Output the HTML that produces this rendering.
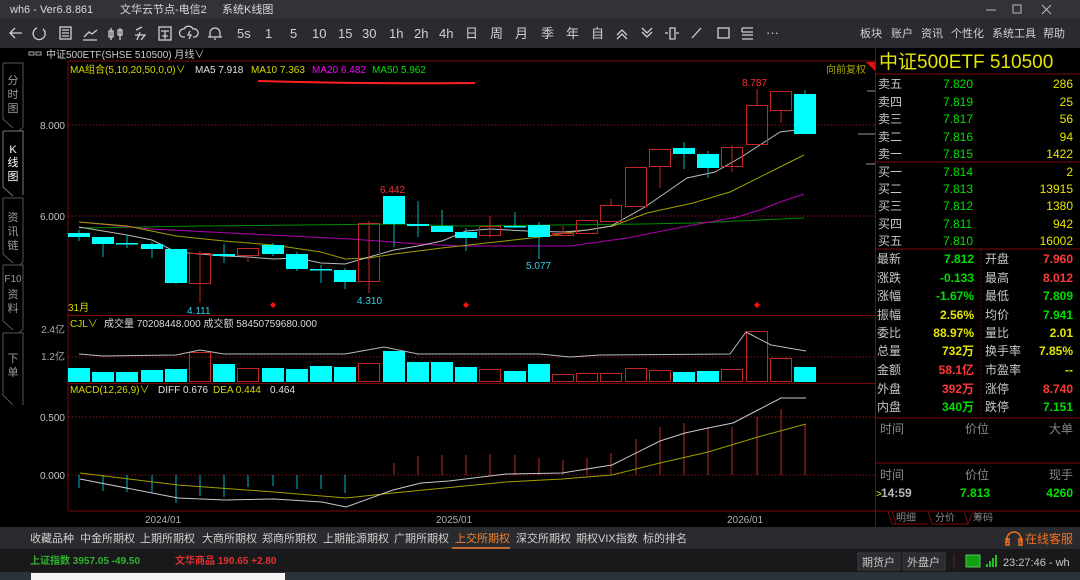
<!DOCTYPE html>
<html><head><meta charset="utf-8"><style>
html,body{margin:0;padding:0;background:#000;width:1080px;height:580px;overflow:hidden}
svg{display:block}
text{font-family:"Liberation Sans","Noto Sans CJK SC",sans-serif}
</style></head><body>
<svg width="1080" height="580" viewBox="0 0 1080 580" xmlns="http://www.w3.org/2000/svg">
<!-- title bar -->
<rect x="0" y="0" width="1080" height="19" fill="#323336"/>
<g fill="#d8d8d8" font-size="11">
<text x="10" y="13">wh6  -  Ver6.8.861</text>
<text x="120" y="13">文华云节点-电信2</text>
<text x="222" y="13">系统K线图</text>
</g>
<g stroke="#bbb" stroke-width="1" fill="none">
<line x1="986" y1="10" x2="996" y2="10"/>
<rect x="1013" y="5" width="8" height="8"/>
<path d="M1042 5l9 9M1051 5l-9 9"/>
</g>
<!-- toolbar -->
<rect x="0" y="19" width="1080" height="29" fill="#2a2b2e"/>
<g stroke="#d0d0d0" stroke-width="1.3" fill="none">
<path d="M22 33H10M15 28l-5 5 5 5"/>
<path d="M37 28a6 6 0 1 0 6 1"/>
<rect x="60" y="27" width="11" height="12"/><path d="M62 30h7M62 33h7M62 36h7"/>
<path d="M84 37l5-5 3 2 5-4M83 40h14"/>
<path d="M111 28v12M109 31h4v6h-4zM120 28v12M118 30h4v5h-4z"/>
<path d="M136 30l6-3M135 35h10l-4 5M140 32l-3 8"/>
<rect x="159" y="27" width="12" height="13"/><path d="M161 31h8M165 31v8M162 36h6"/>
<path d="M185 37h-2a4 4 0 0 1 1-8 5 5 0 0 1 9 0 4 4 0 0 1 2 8h-2M190 31l-2 4h3l-2 4"/>
<path d="M210 37v-4a5 5 0 0 1 10 0v4h2H208M214 39h2"/>
<path d="M617 35l5-5 5 5M617 39l5-5 5 5"/>
<path d="M642 28l5 5 5-5M642 32l5 5 5-5"/>
<path d="M665 33h3M676 33h3M670 28h5v11h-5z"/>
<path d="M692 38l9-10"/>
<rect x="718" y="28" width="11" height="10"/>
<path d="M742 28h11M742 32h11M742 35h11M742 39h11M742 28v4"/>
</g>
<g fill="#d0d0d0" font-size="13">
<text x="237" y="38">5s</text><text x="265" y="38">1</text><text x="290" y="38">5</text>
<text x="312" y="38">10</text><text x="338" y="38">15</text><text x="362" y="38">30</text>
<text x="389" y="38">1h</text><text x="414" y="38">2h</text><text x="439" y="38">4h</text>
<text x="465" y="38">日</text><text x="490" y="38">周</text><text x="515" y="38">月</text>
<text x="541" y="38">季</text><text x="566" y="38">年</text><text x="591" y="38">自</text>
<text x="766" y="37">···</text>
</g>
<g fill="#d0d0d0" font-size="11">
<text x="860" y="37">板块</text><text x="891" y="37">账户</text><text x="921" y="37">资讯</text>
<text x="951" y="37">个性化</text><text x="992" y="37">系统工具</text><text x="1043" y="37">帮助</text>
</g>

<!-- chart header -->
<g stroke="#aaa" fill="none"><rect x="29" y="52" width="5" height="3"/><rect x="36" y="52" width="5" height="3"/></g>
<text x="46" y="58" fill="#cfcfcf" font-size="10">中证500ETF(SHSE 510500)   月线∨</text>

<!-- sidebar tabs -->
<g stroke="#555" fill="#000" stroke-width="1">
<path d="M3 63h20v64l-6 6M3 63v56l10 9"/>
<path d="M3 131h20v64M3 131v56l10 9" stroke="#777"/>
<path d="M3 198h20v64M3 198v56l10 9M23 262l-6 6"/>
<path d="M3 265h20v64M3 265v56l10 9M23 329l-6 6"/>
<path d="M3 333h20v72M3 333v62l10 10"/>
</g>
<g fill="#9a9a9a" font-size="11" text-anchor="middle">
<text x="13" y="84">分</text><text x="13" y="98">时</text><text x="13" y="112">图</text>
<text x="13" y="153" fill="#fff">K</text><text x="13" y="166" fill="#fff">线</text><text x="13" y="180" fill="#fff">图</text>
<text x="13" y="221">资</text><text x="13" y="235">讯</text><text x="13" y="249">链</text>
<text x="13" y="282" font-size="10">F10</text><text x="13" y="298">资</text><text x="13" y="312">料</text>
<text x="13" y="362">下</text><text x="13" y="376">单</text>
</g>

<!-- panels borders -->
<g stroke="#7a0a0a" stroke-width="1" fill="none">
<line x1="68" y1="61" x2="875" y2="61"/>
<line x1="68" y1="61" x2="68" y2="511"/>
<line x1="68" y1="315.5" x2="875" y2="315.5"/>
<line x1="68" y1="383.5" x2="875" y2="383.5"/>
<line x1="68" y1="511" x2="875" y2="511"/>
<line x1="875.5" y1="48" x2="875.5" y2="527"/>
</g>
<g stroke="#8a1a1a" stroke-dasharray="1.5 2" stroke-width="1">
<line x1="68" y1="125" x2="875" y2="125"/>
<line x1="68" y1="216" x2="875" y2="216"/>
<line x1="68" y1="357" x2="875" y2="357"/>
<line x1="68" y1="417" x2="875" y2="417"/>
<line x1="68" y1="475" x2="875" y2="475"/>
</g>
<g fill="#c4c4c4" font-size="10" text-anchor="end">
<text x="65" y="129">8.000</text><text x="65" y="220">6.000</text>
<text x="65" y="333" fill="#aaa">2.4亿</text><text x="65" y="360" fill="#aaa">1.2亿</text>
<text x="65" y="421">0.500</text><text x="65" y="479">0.000</text>
</g>

<!-- MA legend -->
<g font-size="10">
<text x="70" y="73" fill="#d8d800">MA组合(5,10,20,50,0,0)∨</text>
<text x="195" y="73" fill="#e0e0e0">MA5 7.918</text>
<text x="251" y="73" fill="#d8d800">MA10 7.363</text>
<text x="312" y="73" fill="#ff00ff">MA20 6.482</text>
<text x="372" y="73" fill="#00e000">MA50 5.962</text>
</g>
<path d="M258 81Q360 84 475 83" stroke="#ff2020" stroke-width="2" fill="none"/>
<text x="866" y="73" fill="#a8a800" font-size="10" text-anchor="end">向前复权</text>
<path d="M866 62h9v9z" fill="#e01010"/>
<g stroke="#999"><line x1="867" y1="91" x2="875" y2="91"/><line x1="858" y1="134" x2="875" y2="134"/><line x1="866" y1="164" x2="875" y2="164"/></g>

<!-- MA lines -->
<g fill="none" stroke-width="1">
<polyline stroke="#008c00" points="79,228 200,226 400,224 460,226 643,224 693,223 760,220 804,218"/>
<polyline stroke="#b000b0" points="79,222 150,229 250,234 350,239 420,244 460,246 570,246 627,238 693,225 737,217 760,210 780,202 804,194"/>
<polyline stroke="#a0a000" points="79,222 127,226 176,236 224,241 273,245 321,252 345,259 369,258 394,254 442,248 460,246 540,237 613,226 647,213 693,203 730,192 780,167 804,155"/>
<polyline stroke="#bbbbbb" points="79,227 103,231 127,235 152,240 176,252 200,254 224,256 248,257 273,259 297,258 321,263 345,264 369,257 394,250 418,246 442,241 466,231 490,229 527,231 563,232 588,230 611,226 645,207 687,178 715,172 743,156 780,132 804,129"/>
</g>

<!-- candles -->
<g stroke-width="1">
<g stroke="#00b8b8">
<line x1="79" y1="230" x2="79" y2="241"/><line x1="103" y1="237" x2="103" y2="257"/><line x1="127" y1="235" x2="127" y2="248"/><line x1="152" y1="242" x2="152" y2="258"/><line x1="176" y1="249" x2="176" y2="284"/><line x1="224" y1="244" x2="224" y2="263"/><line x1="273" y1="243" x2="273" y2="256"/><line x1="297" y1="252" x2="297" y2="271"/><line x1="321" y1="265" x2="321" y2="283"/><line x1="345" y1="268" x2="345" y2="289"/><line x1="394" y1="196" x2="394" y2="247"/><line x1="418" y1="201" x2="418" y2="237"/><line x1="442" y1="210" x2="442" y2="232"/><line x1="466" y1="228" x2="466" y2="251"/><line x1="515" y1="212" x2="515" y2="228"/><line x1="539" y1="222" x2="539" y2="259"/><line x1="684" y1="142" x2="684" y2="169"/><line x1="708" y1="151" x2="708" y2="178"/><line x1="805" y1="90" x2="805" y2="134"/>
</g>
<g fill="#00ffff">
<rect x="68" y="233" width="22" height="4"/><rect x="92" y="237" width="22" height="7"/><rect x="116" y="243" width="22" height="1.5"/><rect x="141" y="244" width="22" height="5"/><rect x="165" y="249" width="22" height="34"/><rect x="213" y="254" width="22" height="2"/><rect x="262" y="245" width="22" height="9"/><rect x="286" y="254" width="22" height="15"/><rect x="310" y="269" width="22" height="1.5"/><rect x="334" y="270" width="22" height="12"/><rect x="383" y="196" width="22" height="28"/><rect x="407" y="224" width="22" height="2"/><rect x="431" y="226" width="22" height="6"/><rect x="455" y="232" width="22" height="6"/><rect x="504" y="226" width="22" height="1.5"/><rect x="528" y="225" width="22" height="12"/><rect x="673" y="148" width="22" height="6"/><rect x="697" y="154" width="22" height="14"/><rect x="794" y="94" width="22" height="40"/>
</g>
<g stroke="#c02828" fill="none">
<line x1="200" y1="251" x2="200" y2="303"/><line x1="248" y1="256" x2="248" y2="262"/><line x1="369" y1="221" x2="369" y2="293"/><line x1="490" y1="216" x2="490" y2="238"/><line x1="563" y1="226" x2="563" y2="233"/><line x1="611" y1="199" x2="611" y2="205"/><line x1="660" y1="167" x2="660" y2="188"/><line x1="732" y1="145" x2="732" y2="172"/><line x1="757" y1="89" x2="757" y2="105"/><line x1="781" y1="111" x2="781" y2="123"/>
<rect x="189.5" y="253.5" width="21" height="30"/><rect x="237.5" y="248.5" width="21" height="7"/><rect x="358.5" y="223.5" width="21" height="58"/><rect x="479.5" y="226.5" width="21" height="9"/><rect x="552.5" y="233.5" width="21" height="2"/><rect x="576.5" y="220.5" width="21" height="13"/><rect x="600.5" y="205.5" width="21" height="16"/><rect x="625.5" y="167.5" width="21" height="39"/><rect x="649.5" y="149.5" width="21" height="17"/><rect x="721.5" y="147.5" width="21" height="19"/><rect x="746.5" y="105.5" width="21" height="39"/><rect x="770.5" y="91.5" width="21" height="19"/>
</g>
</g>
<g font-size="10">
<text x="187" y="314" fill="#30d0e8">4.111</text>
<text x="380" y="193" fill="#ff3030">6.442</text>
<text x="357" y="304" fill="#30d0e8">4.310</text>
<text x="526" y="269" fill="#30d0e8">5.077</text>
<text x="742" y="86" fill="#ff3030">8.787</text>
<text x="68" y="311" fill="#d8d800">31月</text>
</g>
<g fill="#ff1010"><path d="M273 302l3 3-3 3-3-3z"/><path d="M466 302l3 3-3 3-3-3z"/><path d="M757 302l3 3-3 3-3-3z"/></g>

<!-- volume -->
<g font-size="10"><text x="70" y="327" fill="#d8d800">CJL∨</text><text x="104" y="327" fill="#d8d8d8">成交量 70208448.000   成交额 58450759680.000</text></g>
<g fill="#00ffff">
<rect x="68" y="368" width="22" height="14"/><rect x="92" y="372" width="22" height="10"/><rect x="116" y="372" width="22" height="10"/><rect x="141" y="370" width="22" height="12"/><rect x="165" y="369" width="22" height="13"/><rect x="213" y="364" width="22" height="18"/><rect x="262" y="368" width="22" height="14"/><rect x="286" y="369" width="22" height="13"/><rect x="310" y="366" width="22" height="16"/><rect x="334" y="367" width="22" height="15"/><rect x="383" y="351" width="22" height="31"/><rect x="407" y="362" width="22" height="20"/><rect x="431" y="362" width="22" height="20"/><rect x="455" y="367" width="22" height="15"/><rect x="504" y="371" width="22" height="11"/><rect x="528" y="364" width="22" height="18"/><rect x="673" y="372" width="22" height="10"/><rect x="697" y="371" width="22" height="11"/><rect x="794" y="367" width="22" height="15"/>
</g>
<g stroke="#c02828" fill="none">
<rect x="189.5" y="352.5" width="21" height="29"/><rect x="237.5" y="368.5" width="21" height="13"/><rect x="358.5" y="363.5" width="21" height="18"/><rect x="479.5" y="369.5" width="21" height="12"/><rect x="552.5" y="374.5" width="21" height="7"/><rect x="576.5" y="373.5" width="21" height="8"/><rect x="600.5" y="373.5" width="21" height="8"/><rect x="625.5" y="368.5" width="21" height="13"/><rect x="649.5" y="370.5" width="21" height="11"/><rect x="721.5" y="369.5" width="21" height="12"/><rect x="746.5" y="331.5" width="21" height="50"/><rect x="770.5" y="358.5" width="21" height="23"/>
</g>
<polyline fill="none" stroke="#bbb" points="79,354 103,356 176,355 200,350 224,354 345,354 384,347 418,354 540,354 570,357 600,355 730,354 746,332 771,345 806,351"/>

<!-- MACD -->
<g font-size="10"><text x="70" y="393" fill="#d8d800">MACD(12,26,9)∨</text><text x="158" y="393" fill="#e0e0e0">DIFF 0.676</text><text x="213" y="393" fill="#d8d800">DEA 0.444</text><text x="270" y="393" fill="#e0e0e0">0.464</text></g>
<g stroke="#00b8c8">
<line x1="79" y1="475" x2="79" y2="488"/><line x1="103" y1="475" x2="103" y2="491"/><line x1="127" y1="475" x2="127" y2="492"/><line x1="152" y1="475" x2="152" y2="493"/><line x1="176" y1="475" x2="176" y2="503"/><line x1="200" y1="475" x2="200" y2="496"/><line x1="224" y1="475" x2="224" y2="497"/><line x1="248" y1="475" x2="248" y2="487"/><line x1="273" y1="475" x2="273" y2="486"/><line x1="297" y1="475" x2="297" y2="489"/><line x1="321" y1="475" x2="321" y2="489"/><line x1="345" y1="475" x2="345" y2="493"/>
</g>
<g stroke="#c02828">
<line x1="394" y1="475" x2="394" y2="463"/><line x1="418" y1="475" x2="418" y2="456"/><line x1="442" y1="475" x2="442" y2="455"/><line x1="466" y1="475" x2="466" y2="455"/><line x1="490" y1="475" x2="490" y2="454"/><line x1="515" y1="475" x2="515" y2="455"/><line x1="539" y1="475" x2="539" y2="458"/><line x1="563" y1="475" x2="563" y2="460"/><line x1="587" y1="475" x2="587" y2="458"/><line x1="611" y1="475" x2="611" y2="453"/><line x1="636" y1="475" x2="636" y2="439"/><line x1="660" y1="475" x2="660" y2="427"/><line x1="684" y1="475" x2="684" y2="423"/><line x1="708" y1="475" x2="708" y2="427"/><line x1="732" y1="475" x2="732" y2="427"/><line x1="757" y1="475" x2="757" y2="417"/><line x1="781" y1="475" x2="781" y2="409"/><line x1="805" y1="475" x2="805" y2="424"/>
</g>
<polyline fill="none" stroke="#a0a000" points="80,473 178,485 274,492 346,498 393,493 506,482 562,479 612,475 660,463 708,452 758,437 806,424"/>
<polyline fill="none" stroke="#c8c8c8" points="80,479 178,498 225,500 274,499 322,502 346,507 393,490 421,483 449,481 506,474 562,473 612,465 660,441 685,433 708,428 733,423 758,410 781,398 806,398"/>
<g fill="#b0b0b0" font-size="10"><text x="145" y="523">2024/01</text><text x="436" y="523">2025/01</text><text x="727" y="523">2026/01</text></g>

<!-- right panel -->
<g stroke="#7a0a0a" fill="none">
<line x1="875" y1="74" x2="1080" y2="74"/>
<line x1="875" y1="162" x2="1080" y2="162"/>
<line x1="875" y1="249" x2="1080" y2="249"/>
<line x1="981" y1="249" x2="981" y2="418" stroke-dasharray="2 2"/>
<line x1="875" y1="418" x2="1080" y2="418"/>
<line x1="875" y1="463" x2="1080" y2="463"/>
<line x1="875" y1="511" x2="1080" y2="511"/>
<path d="M875 511h13l4 13h36M892 511l4 13M928 511l4 13h36l-4-13M968 524l5-13"/>
</g>
<text x="879" y="68" fill="#e6e600" font-size="19">中证500ETF  510500</text>
<g font-size="12">
<g fill="#c8c8c8"><text x="878" y="88">卖五</text><text x="878" y="106">卖四</text><text x="878" y="123">卖三</text><text x="878" y="141">卖二</text><text x="878" y="158">卖一</text><text x="878" y="176">买一</text><text x="878" y="193">买二</text><text x="878" y="210">买三</text><text x="878" y="228">买四</text><text x="878" y="245">买五</text></g>
<g fill="#00e000"><text x="943" y="88">7.820</text><text x="943" y="106">7.819</text><text x="943" y="123">7.817</text><text x="943" y="141">7.816</text><text x="943" y="158">7.815</text><text x="943" y="176">7.814</text><text x="943" y="193">7.813</text><text x="943" y="210">7.812</text><text x="943" y="228">7.811</text><text x="943" y="245">7.810</text></g>
<g fill="#e6e600" text-anchor="end"><text x="1073" y="88">286</text><text x="1073" y="106">25</text><text x="1073" y="123">56</text><text x="1073" y="141">94</text><text x="1073" y="158">1422</text><text x="1073" y="176">2</text><text x="1073" y="193">13915</text><text x="1073" y="210">1380</text><text x="1073" y="228">942</text><text x="1073" y="245">16002</text></g>
<g fill="#c8c8c8"><text x="877" y="263">最新</text><text x="877" y="282">涨跌</text><text x="877" y="300">涨幅</text><text x="877" y="319">振幅</text><text x="877" y="337">委比</text><text x="877" y="355">总量</text><text x="877" y="374">金额</text><text x="877" y="393">外盘</text><text x="877" y="411">内盘</text>
<text x="985" y="263">开盘</text><text x="985" y="282">最高</text><text x="985" y="300">最低</text><text x="985" y="319">均价</text><text x="985" y="337">量比</text><text x="985" y="355">换手率</text><text x="985" y="374">市盈率</text><text x="985" y="393">涨停</text><text x="985" y="411">跌停</text></g>
<g text-anchor="end" font-weight="bold">
<text x="974" y="263" fill="#00e000">7.812</text><text x="974" y="282" fill="#00e000">-0.133</text><text x="974" y="300" fill="#00e000">-1.67%</text><text x="974" y="319" fill="#e6e600">2.56%</text><text x="974" y="337" fill="#e6e600">88.97%</text><text x="974" y="355" fill="#e6e600">732万</text><text x="974" y="374" fill="#ff3838">58.1亿</text><text x="974" y="393" fill="#ff3838">392万</text><text x="974" y="411" fill="#00e000">340万</text>
<text x="1073" y="263" fill="#ff3838">7.960</text><text x="1073" y="282" fill="#ff3838">8.012</text><text x="1073" y="300" fill="#00e000">7.809</text><text x="1073" y="319" fill="#00e000">7.941</text><text x="1073" y="337" fill="#e6e600">2.01</text><text x="1073" y="355" fill="#e6e600">7.85%</text><text x="1073" y="374" fill="#e6e600">--</text><text x="1073" y="393" fill="#ff3838">8.740</text><text x="1073" y="411" fill="#00e000">7.151</text>
</g>
<g fill="#888"><text x="880" y="433">时间</text><text x="965" y="433">价位</text><text x="1049" y="433">大单</text><text x="880" y="479">时间</text><text x="965" y="479">价位</text><text x="1049" y="479">现手</text></g>
<text x="876" y="497" fill="#e6e600" font-size="10">&gt;</text>
<text x="881" y="497" fill="#b8b8b8" font-weight="bold">14:59</text>
<text x="960" y="497" fill="#00e000" font-weight="bold">7.813</text>
<text x="1073" y="497" fill="#00e000" font-weight="bold" text-anchor="end">4260</text>
</g>
<g fill="#888" font-size="10"><text x="896" y="521">明细</text><text x="935" y="521">分价</text><text x="973" y="521">筹码</text></g>

<!-- bottom tabs -->
<rect x="0" y="527" width="1080" height="22" fill="#2a2b2e"/>
<g fill="#d0d0d0" font-size="11">
<text x="30" y="542">收藏品种</text><text x="80" y="542">中金所期权</text><text x="140" y="542">上期所期权</text><text x="202" y="542">大商所期权</text><text x="262" y="542">郑商所期权</text><text x="323" y="542">上期能源期权</text><text x="394" y="542">广期所期权</text><text x="455" y="542" fill="#f08030">上交所期权</text><text x="516" y="542">深交所期权</text><text x="576" y="542">期权VIX指数</text><text x="643" y="542">标的排名</text>
</g>
<line x1="452" y1="548" x2="510" y2="548" stroke="#f08030" stroke-width="1.5"/>
<path d="M1007 543v-4a7 7 0 0 1 14 0v4M1006 539h3v6h-3zM1019 539h3v6h-3z" stroke="#f07020" stroke-width="1.5" fill="none"/>
<text x="1025" y="543" fill="#f07020" font-size="12">在线客服</text>
<!-- status -->
<rect x="0" y="549" width="1080" height="23" fill="#19191b"/>
<g font-size="10" font-weight="bold"><text x="30" y="564" fill="#30b030">上证指数 3957.05 -49.50</text><text x="175" y="564" fill="#e03030">文华商品 190.65 +2.80</text></g>
<rect x="858" y="553" width="42" height="17" fill="#2c2d30" stroke="#3a3b3e"/><rect x="903" y="553" width="42" height="17" fill="#2c2d30" stroke="#3a3b3e"/>
<g fill="#c8c8c8" font-size="11"><text x="862" y="566">期货户</text><text x="907" y="566">外盘户</text></g>
<line x1="954" y1="554" x2="954" y2="569" stroke="#602020"/>
<rect x="966" y="555" width="14" height="12" fill="#10a010" stroke="#60c060"/>
<g fill="#20c020"><rect x="986" y="564" width="2" height="3"/><rect x="989" y="561" width="2" height="6"/><rect x="992" y="558" width="2" height="9"/><rect x="995" y="555" width="2" height="12"/></g>
<text x="1003" y="566" fill="#c8c8c8" font-size="11">23:27:46 - wh</text>
<rect x="0" y="572" width="1080" height="8" fill="#2b333a"/>
<rect x="31" y="573" width="254" height="7" fill="#f4f4f4"/>
</svg>
</body></html>
